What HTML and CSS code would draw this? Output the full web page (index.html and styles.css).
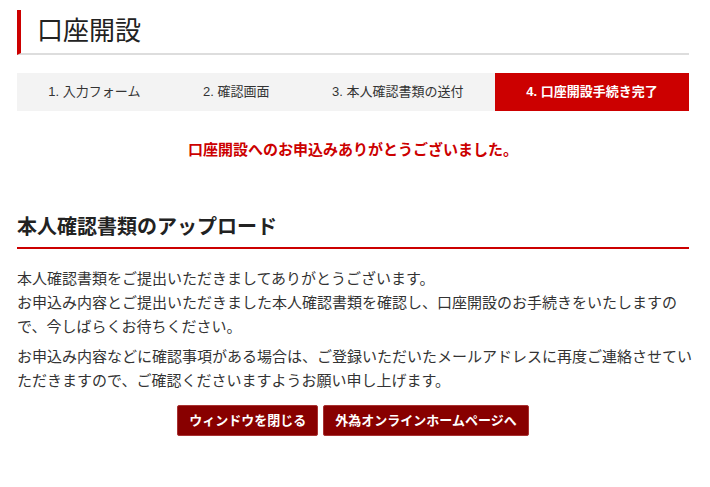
FILE: index.html
```html
<!DOCTYPE html>
<html lang="ja">
<head>
<meta charset="utf-8">
<title>口座開設</title>
<link rel="stylesheet" href="styles.css">
</head>
<body>
<div class="page">
  <h1 class="page-title">口座開設</h1>
  <ol class="steps">
    <li class="step">1. 入力フォーム</li>
    <li class="step">2. 確認画面</li>
    <li class="step">3. 本人確認書類の送付</li>
    <li class="step step-current">4. 口座開設手続き完了</li>
  </ol>
  <p class="thanks">口座開設へのお申込みありがとうございました。</p>
  <h2 class="section-title">本人確認書類のアップロード</h2>
  <p class="text">本人確認書類をご提出いただきましてありがとうございます。<br>お申込み内容とご提出いただきました本人確認書類を確認し、口座開設のお手続きをいたしますので、今しばらくお待ちください。</p>
  <p class="text">お申込み内容などに確認事項がある場合は、ご登録いただいたメールアドレスに再度ご連絡させていただきますので、ご確認くださいますようお願い申し上げます。</p>
  <div class="actions">
    <button class="btn" type="button">ウィンドウを閉じる</button>
    <button class="btn" type="button">外為オンラインホームページへ</button>
  </div>
</div>
</body>
</html>
```

FILE: styles.css
```css
* {
  box-sizing: border-box;
}

body {
  margin: 0;
  background: #fff;
  color: #333;
  font-family: "Liberation Sans", "Noto Sans CJK JP", sans-serif;
}

.page {
  padding: 10px 21px 0 17px;
}

.page-title {
  margin: 0;
  height: 45px;
  padding-left: 16px;
  border-left: 4px solid #cc0000;
  border-bottom: 2px solid #dddddd;
  font-size: 26px;
  font-weight: normal;
  line-height: 42px;
  color: #222;
}

.steps {
  display: flex;
  margin: 18px 0 0;
  padding: 0;
  list-style: none;
  background: #f3f3f3;
}

.step {
  flex: 1 1 auto;
  text-align: center;
  font-size: 13px;
  line-height: 38px;
  color: #333;
  white-space: nowrap;
}

.step-current {
  background: #cc0000;
  color: #fff;
  font-weight: bold;
}

.thanks {
  margin: 27px 0 0;
  text-align: center;
  color: #cc0000;
  font-size: 15px;
  font-weight: bold;
  line-height: 24px;
}

.section-title {
  margin: 50px 0 0;
  padding-bottom: 5px;
  border-bottom: 2px solid #cc0000;
  font-size: 20px;
  font-weight: bold;
  line-height: 30px;
  color: #222;
}

.text {
  margin: 18px -4px 0 0;
  font-size: 15px;
  line-height: 24px;
  color: #333;
}

.text + .text {
  margin-top: 6px;
}

.actions {
  display: flex;
  justify-content: center;
  gap: 5px;
  margin-top: 12px;
}

.btn {
  height: 31px;
  padding: 0 11px;
  border: 1px solid #a83232;
  border-radius: 2px;
  background: #880000;
  color: #fff;
  font-family: "Liberation Sans", "Noto Sans CJK JP", sans-serif;
  font-size: 13px;
  font-weight: bold;
  line-height: 29px;
  cursor: pointer;
}
```
